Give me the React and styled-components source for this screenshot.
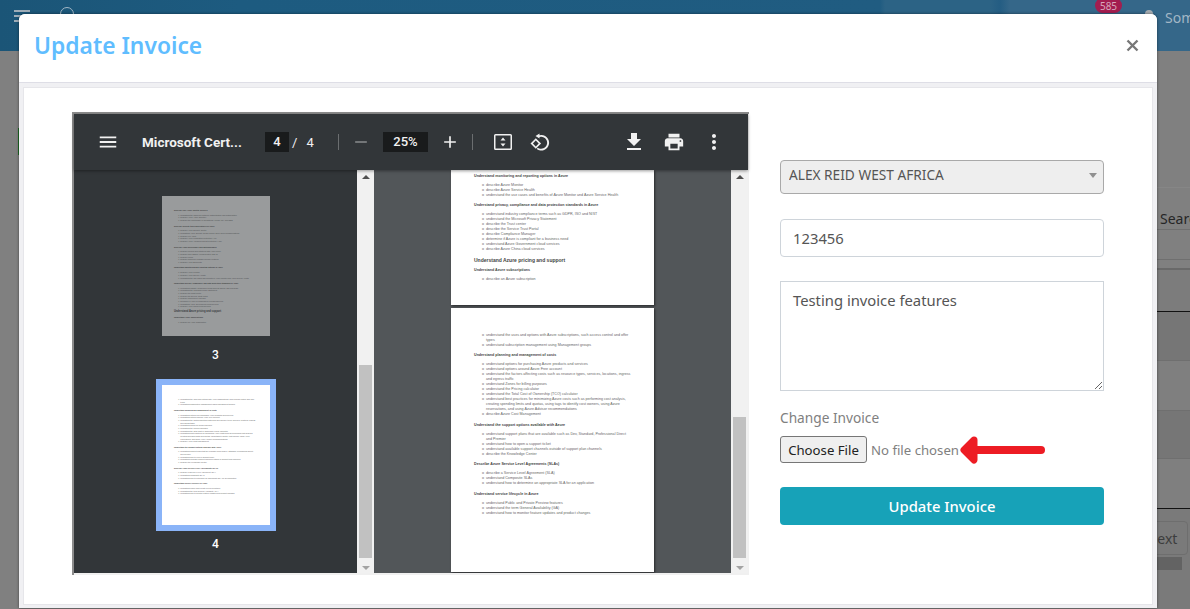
import React from "react";
import styled, { createGlobalStyle } from "styled-components";

const GlobalStyle = createGlobalStyle`
  html, body {
    margin: 0;
    height: 100%;
    overflow: hidden;
    background: #808080;
    font-family: "Noto Sans", "Open Sans", sans-serif;
  }
`;

const page3 = [
  { title: "Describe core Azure identity services", items: ["understand the difference between authentication and authorization", "describe Azure Active Directory", "describe the functionality of Conditional Access, MFA and SSO"] },
  { title: "Describe security tools and features of Azure", items: ["describe Azure Security Center", "understand Azure Security Center secure score and recommendations", "describe Key Vault", "describe Azure Information Protection (AIP)", "describe Azure Advanced Threat Protection (ATP)"] },
  { title: "Describe Azure governance and methodologies", items: ["describe policies and initiatives with Azure Policy", "describe Role-Based Access Control (RBAC)", "describe Locks", "describe Resource Manager security features", "describe Azure Blueprints"] },
  { title: "Understand monitoring and reporting options in Azure", items: ["describe Azure Monitor", "describe Azure Service Health", "understand the use cases and benefits of Azure Monitor and Azure Service Health"] },
  { title: "Understand privacy, compliance and data protection standards in Azure", items: ["understand industry compliance terms such as GDPR, ISO and NIST", "understand the Microsoft Privacy Statement", "describe the Trust center", "describe the Service Trust Portal", "describe Compliance Manager", "determine if Azure is compliant for a business need", "understand Azure Government cloud services", "describe Azure China cloud services"] },
  { title: "Understand Azure pricing and support", big: true },
  { title: "Understand Azure subscriptions", items: ["describe an Azure subscription"] },
];

const page4 = [
  { items: ["understand the uses and options with Azure subscriptions, such access control and offer\ntypes", "understand subscription management using Management groups"] },
  { title: "Understand planning and management of costs", items: ["understand options for purchasing Azure products and services", "understand options around Azure Free account", "understand the factors affecting costs such as resource types, services, locations, ingress\nand egress traffic", "understand Zones for billing purposes", "understand the Pricing calculator", "understand the Total Cost of Ownership (TCO) calculator", "understand best practices for minimizing Azure costs such as performing cost analysis,\ncreating spending limits and quotas, using tags to identify cost owners, using Azure\nreservations, and using Azure Advisor recommendations", "describe Azure Cost Management"] },
  { title: "Understand the support options available with Azure", items: ["understand support plans that are available such as Dev, Standard, Professional Direct\nand Premier", "understand how to open a support ticket", "understand available support channels outside of support plan channels", "describe the Knowledge Center"] },
  { title: "Describe Azure Service Level Agreements (SLAs)", items: ["describe a Service Level Agreement (SLA)", "understand Composite SLAs", "understand how to determine an appropriate SLA for an application"] },
  { title: "Understand service lifecycle in Azure", items: ["understand Public and Private Preview features", "understand the term General Availability (GA)", "understand how to monitor feature updates and product changes"] },
];

const rows = [
  { height: 41, text: "Search", line: "#6f6f6f", top: true },
  { height: 29, line: "#6f6f6f" },
  { height: 8, line: "#696969", thick: true },
  { height: 41, bg: "#7c7c7c", line: "#111" },
  { height: 48, bg: "#767676", line: "#6f6f6f" },
  { height: 49, bg: "#7f7f7f", line: "#6f6f6f" },
  { height: 47, bg: "#767676", line: "#6f6f6f" },
  { height: 49, bg: "#7f7f7f", line: "#111" },
];

const Screen = styled.div`
  position: relative;
  width: 1190px;
  height: 609px;
  overflow: hidden;
`;

const TopBar = styled.header`
  display: flex;
  height: 51px;
  color: #a3b7c6;
  background: linear-gradient(90deg, #1b5577 0, #1d5b80 240px, #205c81 880px, #2c6385 885px, #2c6385 990px, #245d83 1000px, #356789 1010px);
`;

const MenuLines = styled.div`
  width: 16px;
  height: 12px;
  margin: 10px 0 0 14px;
  border-top: 2px solid #9fadb8;
  border-bottom: 2px solid #9fadb8;
  box-sizing: border-box;
  background: linear-gradient(#9fadb8, #9fadb8) left center / 11px 2px no-repeat;
`;

const SearchCircle = styled.div`
  width: 12px;
  height: 12px;
  margin: 7px 0 0 30px;
  border: 1px solid #a3b7c6;
  border-radius: 50%;
`;

const UserArea = styled.div`
  display: flex;
  width: 95px;
  margin-left: auto;
  overflow: hidden;
  white-space: nowrap;
`;

const Badge = styled.span`
  flex: none;
  width: 27px;
  height: 15px;
  margin-top: -2px;
  border-radius: 9px;
  background: #a31d4f;
  color: #d8a8bc;
  font-size: 10px;
  line-height: 16px;
  text-align: center;
`;

const UserDot = styled.span`
  flex: none;
  width: 8px;
  height: 8px;
  margin: 10px 0 0 23px;
  border-radius: 50%;
  background: #a7adb2;
`;

const UserName = styled.span`
  flex: none;
  margin: 8px 0 0 12px;
  font-size: 14px;
  line-height: 20px;
`;

const Content = styled.main`
  margin-left: 19px;
`;

const LeadPanel = styled.div`
  height: 136px;
`;

const GreenMark = styled.div`
  width: 1px;
  height: 27px;
  margin-left: -1px;
  position: relative;
  top: 77px;
  background: #1d6a22;
`;

const TableRow = styled.div`
  box-sizing: content-box;
  height: ${(props) => props.$height}px;
  padding-left: 1141px;
  background: ${(props) => props.$bg || "#808080"};
  border-top: ${(props) => (props.$top ? "1px solid #868686" : "0")};
  border-bottom: ${(props) => (props.$thick ? 2 : 1)}px solid ${(props) => props.$line};
  color: #262626;
  font-size: 14px;
  line-height: 62px;
  white-space: nowrap;
`;

const Footer = styled.div`
  display: flex;
  flex-direction: column;
  align-items: flex-end;
  height: 100px;
  padding-top: 12px;
  background: #7a7a7a;
`;

const NextButton = styled.div`
  width: 60px;
  height: 34px;
  margin-right: 2px;
  padding-left: 8px;
  border: 1px solid #6e6e6e;
  border-radius: 4px;
  box-sizing: border-box;
  color: #3d3d3d;
  font-size: 14px;
  line-height: 34px;
  text-align: center;
`;

const ScrollBar = styled.div`
  width: 100px;
  height: 13px;
  margin: 2px 8px 0 0;
  background: #636363;
`;

const Modal = styled.section`
  position: absolute;
  top: 14px;
  left: 19px;
  display: flex;
  flex-direction: column;
  width: 1138px;
  height: 594px;
  border-radius: 6px 6px 0 0;
  background: #f0f0f3;
  box-shadow: 0 0 3px rgba(0, 0, 0, 0.5);
  overflow: hidden;
`;

const ModalHeader = styled.div`
  display: flex;
  flex: none;
  align-items: center;
  justify-content: space-between;
  box-sizing: content-box;
  height: 62px;
  padding: 0 18px 6px 15px;
  border-bottom: 1px solid #dedee6;
  background: #fff;
`;

const ModalTitle = styled.h2`
  margin: 0;
  color: #60bdff;
  font-size: 22.8px;
  font-weight: 600;
`;

const CloseMark = styled.svg`
  width: 13px;
  height: 13px;
  margin-top: 1px;
`;

const ModalBody = styled.div`
  display: flex;
  flex: none;
  gap: 31px;
  box-sizing: border-box;
  width: 1130px;
  height: 518px;
  margin: 4px 0 0 4px;
  padding: 24px 0 0 48px;
  border: 1px solid #e6e6ea;
  background: #fff;
`;

const Viewer = styled.div`
  display: flex;
  flex: none;
  flex-direction: column;
  box-sizing: border-box;
  width: 677px;
  height: 463px;
  border-top: 2px solid #8c8c8c;
  border-left: 2px solid #8c8c8c;
  background: #f0f0f0;
`;

const ViewerBar = styled.div`
  display: flex;
  flex: none;
  align-items: center;
  width: 674px;
  height: 56px;
  padding-left: 23px;
  box-sizing: border-box;
  background: #323639;
  box-shadow: 0 1px 3px rgba(0, 0, 0, 0.4);
  color: #f1f1f1;
  font-family: Roboto, sans-serif;
  font-size: 13px;
  position: relative;
  z-index: 1;
`;

const ToolIcon = styled.svg`
  flex: none;
  width: ${(props) => props.$size || 24}px;
  height: ${(props) => props.$size || 24}px;
  margin-left: ${(props) => props.$left || 0}px;
  fill: ${(props) => props.$fill || "#f1f1f1"};
`;

const DocName = styled.span`
  width: 102px;
  margin-left: 23px;
  font-size: 13.5px;
  font-weight: 700;
  white-space: nowrap;
`;

const PageBox = styled.span`
  width: ${(props) => props.$width}px;
  height: 20px;
  margin-left: ${(props) => props.$left}px;
  background: #191b1c;
  font-size: 13px;
  font-weight: 500;
  line-height: 20px;
  text-align: center;
`;

const PageTotal = styled.span`
  width: 49px;
  padding-left: 3px;
  box-sizing: border-box;
  font-size: 13px;
  word-spacing: 6px;
`;

const BarDivider = styled.span`
  flex: none;
  width: 1px;
  height: 16px;
  margin-left: ${(props) => props.$left}px;
  background: #6b6e70;
`;

const ViewerPanes = styled.div`
  display: flex;
  flex: none;
  height: 403px;
  overflow: hidden;
`;

const Sidebar = styled.div`
  display: flex;
  flex: none;
  flex-direction: column;
  align-items: center;
  box-sizing: border-box;
  width: 283px;
  padding-top: 20px;
  background: #323639;
`;

const ThumbFrame = styled.div`
  border: 6px solid ${(props) => (props.$active ? "#8ab4f8" : "transparent")};
`;

const ThumbLabel = styled.span`
  margin: 6px 0 17px;
  color: #fff;
  font-family: Roboto, sans-serif;
  font-size: 12px;
  font-weight: 500;
  line-height: 14px;
`;

const Sheet = styled.div`
  flex: none;
  box-sizing: border-box;
  width: ${(props) => (props.$thumb ? 108 : 203)}px;
  height: ${(props) => props.$height}px;
  padding: ${(props) => props.$pad}px 0 0 ${(props) => (props.$thumb ? 12.4 : 23)}px;
  background: #fff;
  color: #666;
  font-family: "Liberation Sans", sans-serif;
  font-size: ${(props) => (props.$thumb ? 1.9 : 3.65)}px;
  line-height: ${(props) => (props.$thumb ? 2.65 : 5)}px;
  opacity: ${(props) => (props.$dim ? 0.5 : 1)};
  overflow: hidden;
  box-shadow: ${(props) => (props.$thumb ? "none" : "1px 1px 2px rgba(0, 0, 0, 0.5)")};
  white-space: pre;
`;

const SheetHeading = styled.div`
  margin-bottom: ${(props) => (props.$big ? (props.$thumb ? 2.6 : 5) : props.$thumb ? 2.1 : 4)}px;
  color: #444;
  font-size: ${(props) => (props.$big ? (props.$thumb ? 2.6 : 5) : props.$thumb ? 1.9 : 3.65)}px;
  font-weight: 700;
`;

const SheetList = styled.ul`
  margin: 0 0 ${(props) => (props.$thumb ? 2.9 : 5.5)}px;
  padding-left: ${(props) => (props.$thumb ? 6.4 : 12)}px;
  list-style-type: "o  ";
`;

const ScrollTrack = styled.div`
  display: flex;
  flex: none;
  flex-direction: column;
  align-items: center;
  justify-content: space-between;
  box-sizing: border-box;
  width: ${(props) => props.$width}px;
  padding-bottom: 3px;
  background: #f1f1f1;
`;

const ScrollThumb = styled.div`
  width: 13px;
  height: ${(props) => props.$height}px;
  margin-top: auto;
  margin-bottom: 8px;
  background: #c1c1c1;
`;

const ScrollArrow = styled.span`
  width: 0;
  height: 0;
  margin-top: ${(props) => (props.$up ? 5 : 0)}px;
  border-left: 4px solid transparent;
  border-right: 4px solid transparent;
  border-bottom: ${(props) => (props.$up ? "4px solid #505050" : "0")};
  border-top: ${(props) => (props.$up ? "0" : "4px solid #a3a3a3")};
`;

const MainPane = styled.div`
  display: flex;
  flex: none;
  flex-direction: column;
  align-items: center;
  gap: 3px;
  width: 357px;
  background: #525659;
`;

const InvoiceForm = styled.form`
  display: flex;
  flex: none;
  flex-direction: column;
  width: 324px;
  margin-top: 48px;
  color: #555;
  font-size: 13.7px;
`;

const SelectWrap = styled.div`
  position: relative;
  margin-bottom: 25px;
`;

const CompanySelect = styled.select`
  display: block;
  width: 100%;
  height: 34px;
  padding: 0 0 5px 8px;
  appearance: none;
  border: 1px solid #a9a9a9;
  border-radius: 4px;
  background: #eee;
  color: #555;
  font: inherit;
  opacity: 1;
`;

const SelectCaret = styled.span`
  position: absolute;
  top: 13px;
  right: 7px;
  border-left: 4px solid transparent;
  border-right: 4px solid transparent;
  border-top: 5px solid #909090;
`;

const NumberInput = styled.input`
  box-sizing: border-box;
  height: 38px;
  margin-bottom: 24px;
  padding: 0 12px;
  border: 1px solid #ced4da;
  border-radius: 4px;
  color: #555;
  font: inherit;
  font-size: 14.8px;
  outline: none;
`;

const NotesInput = styled.textarea`
  box-sizing: border-box;
  height: 110px;
  margin-bottom: 17px;
  padding: 8px 12px;
  border: 1px solid #ced4da;
  border-radius: 0;
  color: #555;
  font: inherit;
  font-size: 14.8px;
  outline: none;
`;

const FieldLabel = styled.label`
  margin-bottom: 9px;
  color: #808080;
  font-size: 13.7px;
  line-height: 19px;
`;

const FileRow = styled.div`
  display: flex;
  align-items: center;
  height: 27px;
  margin-bottom: 24px;
`;

const FileInput = styled.input`
  flex: none;
  width: 186px;
  color: #808080;
  font: inherit;
  font-size: 13.2px;

  &::file-selector-button {
    height: 27px;
    width: 87px;
    margin-right: 4px;
    padding: 0;
    border: 1px solid #767676;
    border-radius: 3px;
    background: #efefef;
    color: #222;
    font: inherit;
  }
`;

const RedArrow = styled.svg`
  flex: none;
  width: 88px;
  height: 30px;
  margin-left: -7px;
`;

const UpdateButton = styled.button`
  height: 38px;
  border: 0;
  border-radius: 4px;
  background: #17a2b8;
  color: #fff;
  font: inherit;
  font-size: 14.8px;
  font-weight: 500;
`;

const PageContent = ({ sections, thumb }) =>
  sections.map((section, index) => (
    <div key={index}>
      {section.title && (
        <SheetHeading $thumb={thumb} $big={section.big}>
          {section.title}
        </SheetHeading>
      )}
      {section.items && (
        <SheetList $thumb={thumb}>
          {section.items.map((item) => (
            <li key={item}>{item}</li>
          ))}
        </SheetList>
      )}
    </div>
  ));

const Background = () => (
  <>
    <TopBar>
      <MenuLines />
      <SearchCircle />
      <UserArea>
        <Badge>585</Badge>
        <UserDot />
        <UserName>Some User</UserName>
      </UserArea>
    </TopBar>
    <Content>
      <LeadPanel>
        <GreenMark />
      </LeadPanel>
      {rows.map((row, index) => (
        <TableRow key={index} $height={row.height} $bg={row.bg} $line={row.line} $thick={row.thick} $top={row.top}>
          {row.text}
        </TableRow>
      ))}
      <Footer>
        <NextButton>Next</NextButton>
        <ScrollBar />
      </Footer>
    </Content>
  </>
);

const PdfToolbar = () => (
  <ViewerBar>
    <ToolIcon viewBox="0 0 24 24" $size={22}>
      <path d="M3 18h18v-2H3v2zm0-5h18v-2H3v2zm0-7v2h18V6H3z" />
    </ToolIcon>
    <DocName>Microsoft Cert...</DocName>
    <PageBox $width={24} $left={21}>4</PageBox>
    <PageTotal>/ 4</PageTotal>
    <BarDivider $left={0} />
    <ToolIcon viewBox="0 0 24 24" $size={20} $left={12} $fill="#8a8c8e">
      <path d="M19 13H5v-2h14v2z" />
    </ToolIcon>
    <PageBox $width={45} $left={12}>25%</PageBox>
    <ToolIcon viewBox="0 0 24 24" $size={20} $left={12}>
      <path d="M19 13h-6v6h-2v-6H5v-2h6V5h2v6h6v2z" />
    </ToolIcon>
    <BarDivider $left={12} />
    <ToolIcon viewBox="0 0 24 24" $left={18}>
      <path d="M4.500 4h15A1.500 1.500 0 0 1 21 5.500v13a1.500 1.500 0 0 1-1.500 1.500h-15A1.500 1.500 0 0 1 3 18.500v-13A1.500 1.500 0 0 1 4.500 4zm0 1.500v13h15v-13h-15z" />
      <path d="M12 7.500l2.500 3h-5zM12 16.500l-2.500-3h5z" />
    </ToolIcon>
    <ToolIcon viewBox="0 0 24 24" $left={12}>
      <path d="M12.500 3.500L8.500 6l4 2.500V7a6 6 0 1 1-1.800 10.700l-1 1.400A7.800 7.800 0 1 0 12.500 5.200z" />
      <path d="M8.800 8.200l5.300 5.300-5.300 5.300-5.300-5.300zm0 2.400l-2.900 2.900 2.900 2.900 2.900-2.900z" />
    </ToolIcon>
    <ToolIcon viewBox="0 0 24 24" $left={71}>
      <path d="M19 9h-4V3H9v6H5l7 7 7-7zM5 18v2h14v-2H5z" />
    </ToolIcon>
    <ToolIcon viewBox="0 0 24 24" $size={22} $left={17}>
      <path d="M19 8H5c-1.660 0-3 1.340-3 3v6h4v4h12v-4h4v-6c0-1.660-1.340-3-3-3zm-3 11H8v-5h8v5zm3-7c-.55 0-1-.45-1-1s.45-1 1-1 1 .45 1 1-.45 1-1 1zm-1-9H6v4h12V3z" />
    </ToolIcon>
    <ToolIcon viewBox="0 0 24 24" $left={17}>
      <path d="M12 8c1.100 0 2-.9 2-2s-.9-2-2-2-2 .9-2 2 .9 2 2 2zm0 2c-1.100 0-2 .9-2 2s.9 2 2 2 2-.9 2-2-.9-2-2-2zm0 6c-1.100 0-2 .9-2 2s.9 2 2 2 2-.9 2-2-.9-2-2-2z" />
    </ToolIcon>
  </ViewerBar>
);

const PdfViewer = () => (
  <Viewer>
    <PdfToolbar />
    <ViewerPanes>
      <Sidebar>
        <ThumbFrame>
          <Sheet $thumb $dim $height={140} $pad={13}>
            <PageContent sections={page3} thumb />
          </Sheet>
        </ThumbFrame>
        <ThumbLabel>3</ThumbLabel>
        <ThumbFrame $active>
          <Sheet $thumb $height={140} $pad={13}>
            <PageContent sections={page4} thumb />
          </Sheet>
        </ThumbFrame>
        <ThumbLabel>4</ThumbLabel>
      </Sidebar>
      <ScrollTrack $width={17}>
        <ScrollArrow $up />
        <ScrollThumb $height={193} />
        <ScrollArrow />
      </ScrollTrack>
      <MainPane>
        <Sheet $height={135} $pad={3.5}>
          <PageContent sections={page3.slice(3)} />
        </Sheet>
        <Sheet $height={264} $pad={24.5}>
          <PageContent sections={page4} />
        </Sheet>
      </MainPane>
      <ScrollTrack $width={17}>
        <ScrollArrow $up />
        <ScrollThumb $height={141} />
        <ScrollArrow />
      </ScrollTrack>
    </ViewerPanes>
  </Viewer>
);

const UpdateForm = () => (
  <InvoiceForm>
    <SelectWrap>
      <CompanySelect disabled defaultValue="alex">
        <option value="alex">ALEX REID WEST AFRICA</option>
      </CompanySelect>
      <SelectCaret />
    </SelectWrap>
    <NumberInput readOnly defaultValue="123456" />
    <NotesInput readOnly defaultValue="Testing invoice features" />
    <FieldLabel>Change Invoice</FieldLabel>
    <FileRow>
      <FileInput type="file" />
      <RedArrow viewBox="0 0 88 30">
        <path d="M82 15H9" fill="none" stroke="#ed1c24" strokeWidth="8" strokeLinecap="round" />
        <path d="M15 5L5 15l10 10z" fill="#ed1c24" stroke="#ed1c24" strokeWidth="7" strokeLinejoin="round" />
      </RedArrow>
    </FileRow>
    <UpdateButton type="button">Update Invoice</UpdateButton>
  </InvoiceForm>
);

const App = () => (
  <Screen>
    <GlobalStyle />
    <Background />
    <Modal>
      <ModalHeader>
        <ModalTitle>Update Invoice</ModalTitle>
        <CloseMark viewBox="0 0 13 13">
          <path d="M1.500 1.500l10 10M11.500 1.500l-10 10" stroke="#777" strokeWidth="2.400" fill="none" />
        </CloseMark>
      </ModalHeader>
      <ModalBody>
        <PdfViewer />
        <UpdateForm />
      </ModalBody>
    </Modal>
  </Screen>
);

export default App;
